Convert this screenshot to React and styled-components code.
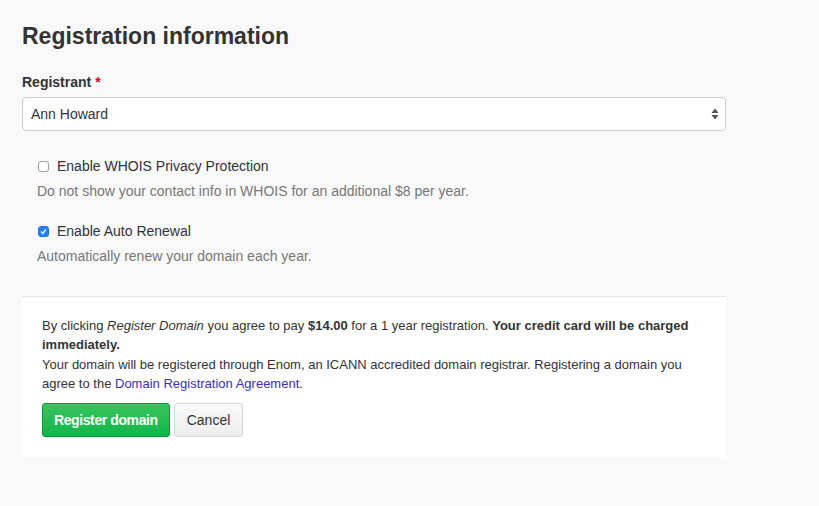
import React from "react";
import styled, { createGlobalStyle } from "styled-components";

const GlobalStyle = createGlobalStyle`
  html, body {
    margin: 0;
    background: #f9f9f9;
    font-family: "Liberation Sans", Arial, sans-serif;
    color: #333;
  }
`;

const Page = styled.div`
  width: 704px;
  padding: 20px 0 48px 22px;
`;

const Title = styled.h2`
  margin: 0 0 21px;
  font-size: 23px;
  font-weight: 600;
  line-height: 32px;
  color: #333;
`;

const Label = styled.label`
  display: block;
  font-size: 14px;
  font-weight: bold;
  margin-bottom: 6px;
  line-height: 18px;
`;

const Required = styled.span`
  color: #e0001b;
`;

const SelectBox = styled.div`
  display: flex;
  align-items: center;
  justify-content: space-between;
  height: 32px;
  padding: 0 6px 0 8px;
  background: #fff;
  border: 1px solid #ccc;
  border-radius: 4px;
  font-size: 14px;
  color: #333;
`;

const Arrows = styled.svg`
  width: 8px;
  height: 12px;
`;

const Options = styled.div`
  padding: 26px 15px 31px;
  border-bottom: 1px solid #e6e6e6;
`;

const Option = styled.div`
  & + & {
    margin-top: 22px;
  }
`;

const CheckRow = styled.label`
  display: flex;
  align-items: center;
  gap: 8px;
  font-size: 14px;
  line-height: 18px;
  color: #333;
`;

const Box = styled.span`
  width: 11px;
  height: 11px;
  box-sizing: border-box;
  border-radius: 3px;
  display: flex;
  align-items: center;
  justify-content: center;
  background: ${(props) => (props.checked ? "#1f82ff" : "#fff")};
  border: 1px solid ${(props) => (props.checked ? "#1a75ef" : "#9e9e9e")};
  margin-left: 1px;
`;

const Help = styled.p`
  margin: 7px 0 0;
  font-size: 14px;
  line-height: 18px;
  color: #777;
`;

const Panel = styled.div`
  background: #fff;
  padding: 19px 20px 20px;
`;

const Terms = styled.p`
  margin: 0;
  font-size: 13px;
  line-height: 19px;
  color: #333;
  & + & {
    margin-top: 1px;
  }
  a {
    color: #3c2ebe;
    text-decoration: none;
  }
`;

const Buttons = styled.div`
  display: flex;
  gap: 4px;
  margin-top: 10px;
`;

const Button = styled.button`
  height: 34px;
  padding: ${(props) => (props.primary ? "0 11px" : "0 12px")};
  font-family: inherit;
  font-size: 14px;
  border-radius: 3px;
  cursor: pointer;
  color: ${(props) => (props.primary ? "#fff" : "#333")};
  font-weight: ${(props) => (props.primary ? "bold" : "normal")};
  border: 1px solid ${(props) => (props.primary ? "#079a3a" : "#d6d6d6")};
  background: ${(props) =>
    props.primary
      ? "linear-gradient(#39c45e, #0fb649)"
      : "linear-gradient(#fafafa, #ededed)"};
  letter-spacing: ${(props) => (props.primary ? "-0.4px" : "0")};
`;

function Checkbox({ checked }) {
  return (
    <Box checked={checked}>
      {checked && (
        <svg width="7" height="7" viewBox="0 0 7 7">
          <path d="M1 3.6 L2.8 5.4 L6 1.4" stroke="#fff" strokeWidth="1.4" fill="none" />
        </svg>
      )}
    </Box>
  );
}

export default function App() {
  return (
    <Page>
      <GlobalStyle />
      <Title>Registration information</Title>
      <Label>
        Registrant <Required>*</Required>
      </Label>
      <SelectBox>
        <span>Ann Howard</span>
        <Arrows viewBox="0 0 8 12">
          <path d="M4 0.5 L7.5 5 L0.5 5 Z" fill="#555" />
          <path d="M4 11.5 L7.5 7 L0.5 7 Z" fill="#555" />
        </Arrows>
      </SelectBox>
      <Options>
        <Option>
          <CheckRow>
            <Checkbox />
            Enable WHOIS Privacy Protection
          </CheckRow>
          <Help>Do not show your contact info in WHOIS for an additional $8 per year.</Help>
        </Option>
        <Option>
          <CheckRow>
            <Checkbox checked />
            Enable Auto Renewal
          </CheckRow>
          <Help>Automatically renew your domain each year.</Help>
        </Option>
      </Options>
      <Panel>
        <Terms>
          By clicking <em>Register Domain</em> you agree to pay <b>$14.00</b> for a 1 year
          registration. <b>Your credit card will be charged immediately.</b>
        </Terms>
        <Terms>
          Your domain will be registered through Enom, an ICANN accredited domain registrar.
          Registering a domain you agree to the <a href="#">Domain Registration Agreement</a>.
        </Terms>
        <Buttons>
          <Button primary>Register domain</Button>
          <Button>Cancel</Button>
        </Buttons>
      </Panel>
    </Page>
  );
}
